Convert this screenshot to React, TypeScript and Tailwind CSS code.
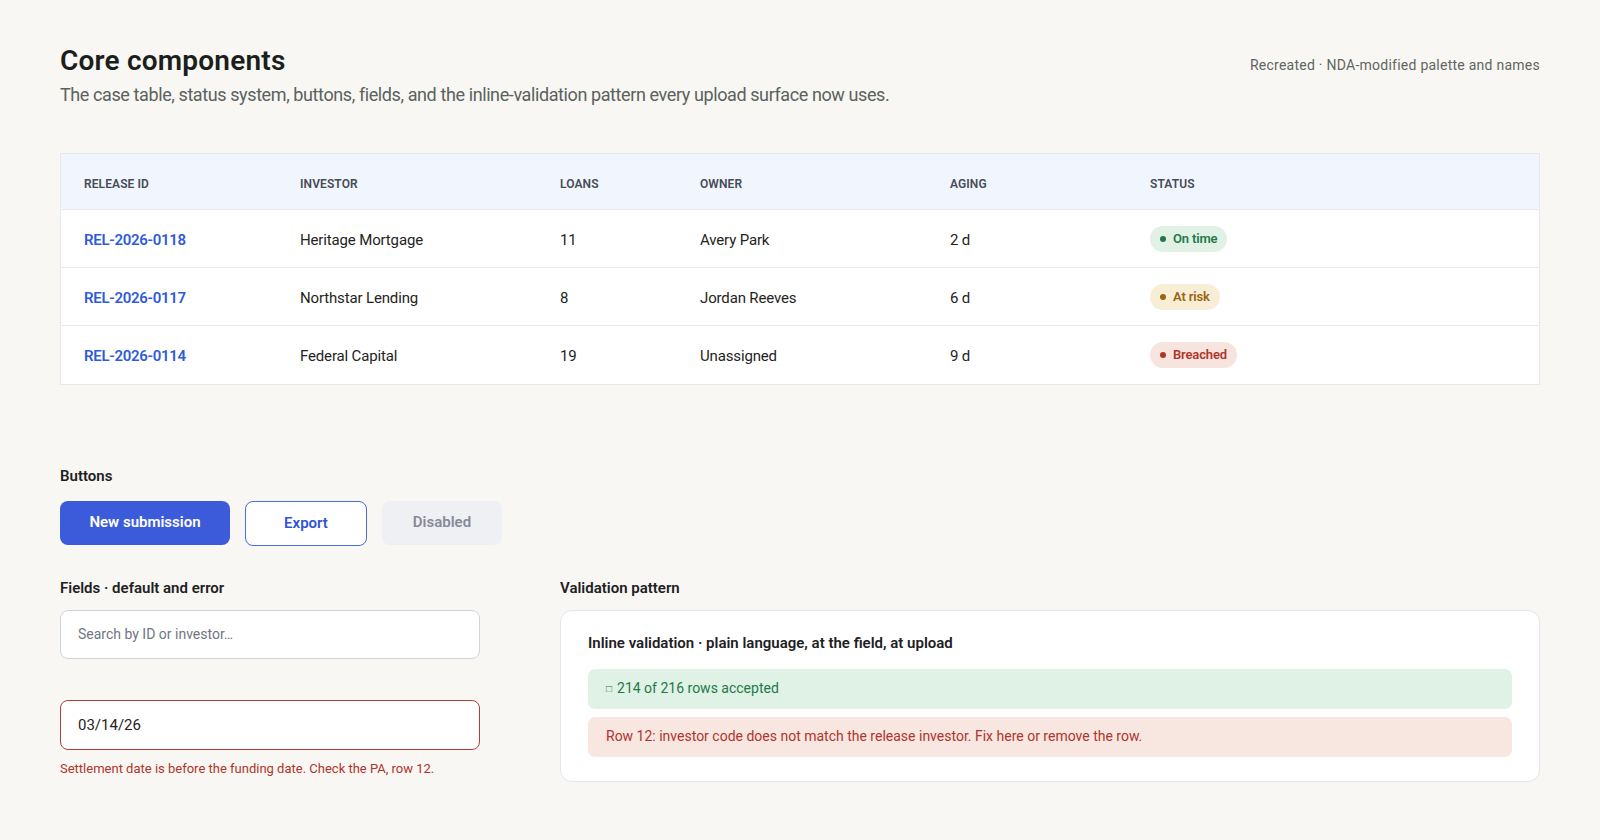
const ROWS = [
  { id: "REL-2026-0118", investor: "Heritage Mortgage", loans: "11", owner: "Avery Park", aging: "2 d", status: "ontime" },
  { id: "REL-2026-0117", investor: "Northstar Lending", loans: "8", owner: "Jordan Reeves", aging: "6 d", status: "risk" },
  { id: "REL-2026-0114", investor: "Federal Capital", loans: "19", owner: "Unassigned", aging: "9 d", status: "breached" },
];

const STATUS: Record<string, { label: string; pill: string; dot: string }> = {
  ontime: { label: "On time", pill: "bg-[#e1f1e6] text-[#1f7a48]", dot: "bg-[#1f7a48]" },
  risk: { label: "At risk", pill: "bg-[#f8edd5] text-[#9a6412]", dot: "bg-[#9a6412]" },
  breached: { label: "Breached", pill: "bg-[#f8e4df] text-[#b0342a]", dot: "bg-[#b0342a]" },
};

function Badge({ status }: { status: string }) {
  const s = STATUS[status];
  return (
    <span className={`inline-flex items-center gap-[7px] rounded-full pl-[10px] pr-[10px] h-[26px] text-[13px] font-semibold ${s.pill}`}>
      <span className={`w-[6px] h-[6px] rounded-full ${s.dot}`} />
      {s.label}
    </span>
  );
}

const COLS = "grid grid-cols-[216px_260px_140px_250px_200px_1fr]";

export default function App() {
  return (
    <div className="min-h-[840px] bg-[#f8f7f3] px-[60px] pt-[44px] pb-10 text-[#1d211f] font-['Roboto',sans-serif]">
      {/* Header */}
      <div className="flex items-start justify-between">
        <div>
          <h1 className="text-[28px] leading-[34px] font-semibold tracking-[0.2px] text-[#1a1e1c]">Core components</h1>
          <p className="mt-[5px] text-[18px] leading-[24px] text-[#5a625e] tracking-[-0.4px]">
            The case table, status system, buttons, fields, and the inline-validation pattern every upload surface now uses.
          </p>
        </div>
        <p className="mt-[11px] text-[14px] text-[#5f6662] tracking-[0.25px]">Recreated · NDA-modified palette and names</p>
      </div>

      {/* Table */}
      <div className="mt-[46px] border border-[#e6e8ec] bg-white">
        <div className={`${COLS} h-[56px] pt-[4px] items-center bg-[#f1f5fd] border-b border-[#e6e8ec] px-[23px] text-[12px] font-semibold uppercase text-[#464c57] tracking-[0.1px]`}>
          <div>Release ID</div>
          <div>Investor</div>
          <div>Loans</div>
          <div>Owner</div>
          <div>Aging</div>
          <div>Status</div>
        </div>
        {ROWS.map((r, i) => (
          <div
            key={r.id}
            className={`${COLS} h-[58px] pt-[3px] items-center px-[23px] text-[15px] tracking-[-0.15px] text-[#1f2421] ${i < ROWS.length - 1 ? "border-b border-[#e6e8ec]" : ""}`}
          >
            <div className="font-semibold text-[#2f5bd9] tracking-[-0.3px]">{r.id}</div>
            <div>{r.investor}</div>
            <div>{r.loans}</div>
            <div>{r.owner}</div>
            <div>{r.aging}</div>
            <div className="-mt-[3px]">
              <Badge status={r.status} />
            </div>
          </div>
        ))}
      </div>

      {/* Buttons */}
      <h2 className="mt-[80px] text-[15px] font-semibold text-[#1d211f]">Buttons</h2>
      <div className="mt-[13px] flex gap-[15px]">
        <button className="h-[44px] w-[170px] rounded-[8px] bg-[#3b5bdb] text-white text-[15px] font-semibold">New submission</button>
        <button className="h-[45px] w-[122px] rounded-[8px] border-[1.5px] border-[#4a6ae0] bg-white text-[#3153d6] text-[15px] font-semibold">Export</button>
        <button disabled className="h-[44px] w-[120px] rounded-[8px] bg-[#eef0f4] text-[#858b96] text-[15px] font-semibold">Disabled</button>
      </div>

      {/* Fields + validation */}
      <div className="mt-[31px] grid grid-cols-[420px_1fr] gap-[80px]">
        <div>
          <h2 className="text-[15px] font-semibold">Fields · default and error</h2>
          <div className="mt-[11px] h-[49px] rounded-[8px] border-[1.5px] border-[#cfd4dc] bg-white flex items-center px-[17px] text-[14px] text-[#6f7682]">
            Search by ID or investor…
          </div>
          <div className="mt-[41px] h-[50px] rounded-[8px] border-[1.5px] border-[#b3402f] bg-white flex items-center px-[17px] text-[15px] text-[#1f2421]">
            03/14/26
          </div>
          <p className="mt-[9px] text-[13px] text-[#b0342a]">Settlement date is before the funding date. Check the PA, row 12.</p>
        </div>
        <div>
          <h2 className="text-[15px] font-semibold">Validation pattern</h2>
          <div className="mt-[11px] rounded-[12px] border-[1.5px] border-[#e3e6ea] bg-white px-[27px] pt-[21px] pb-[24px]">
            <h3 className="text-[15px] font-semibold text-[#1d211f]">Inline validation · plain language, at the field, at upload</h3>
            <div className="mt-[14px] h-[40px] rounded-[7px] bg-[#e0f1e6] flex items-center px-[18px] text-[14px] text-[#1f7a48]">
              <span className="text-[10px] mr-[5px]">□</span>214 of 216 rows accepted
            </div>
            <div className="mt-[8px] h-[40px] rounded-[7px] bg-[#f8e6e1] flex items-center px-[18px] text-[14px] text-[#b0342a]">
              Row 12: investor code does not match the release investor. Fix here or remove the row.
            </div>
          </div>
        </div>
      </div>
    </div>
  );
}
